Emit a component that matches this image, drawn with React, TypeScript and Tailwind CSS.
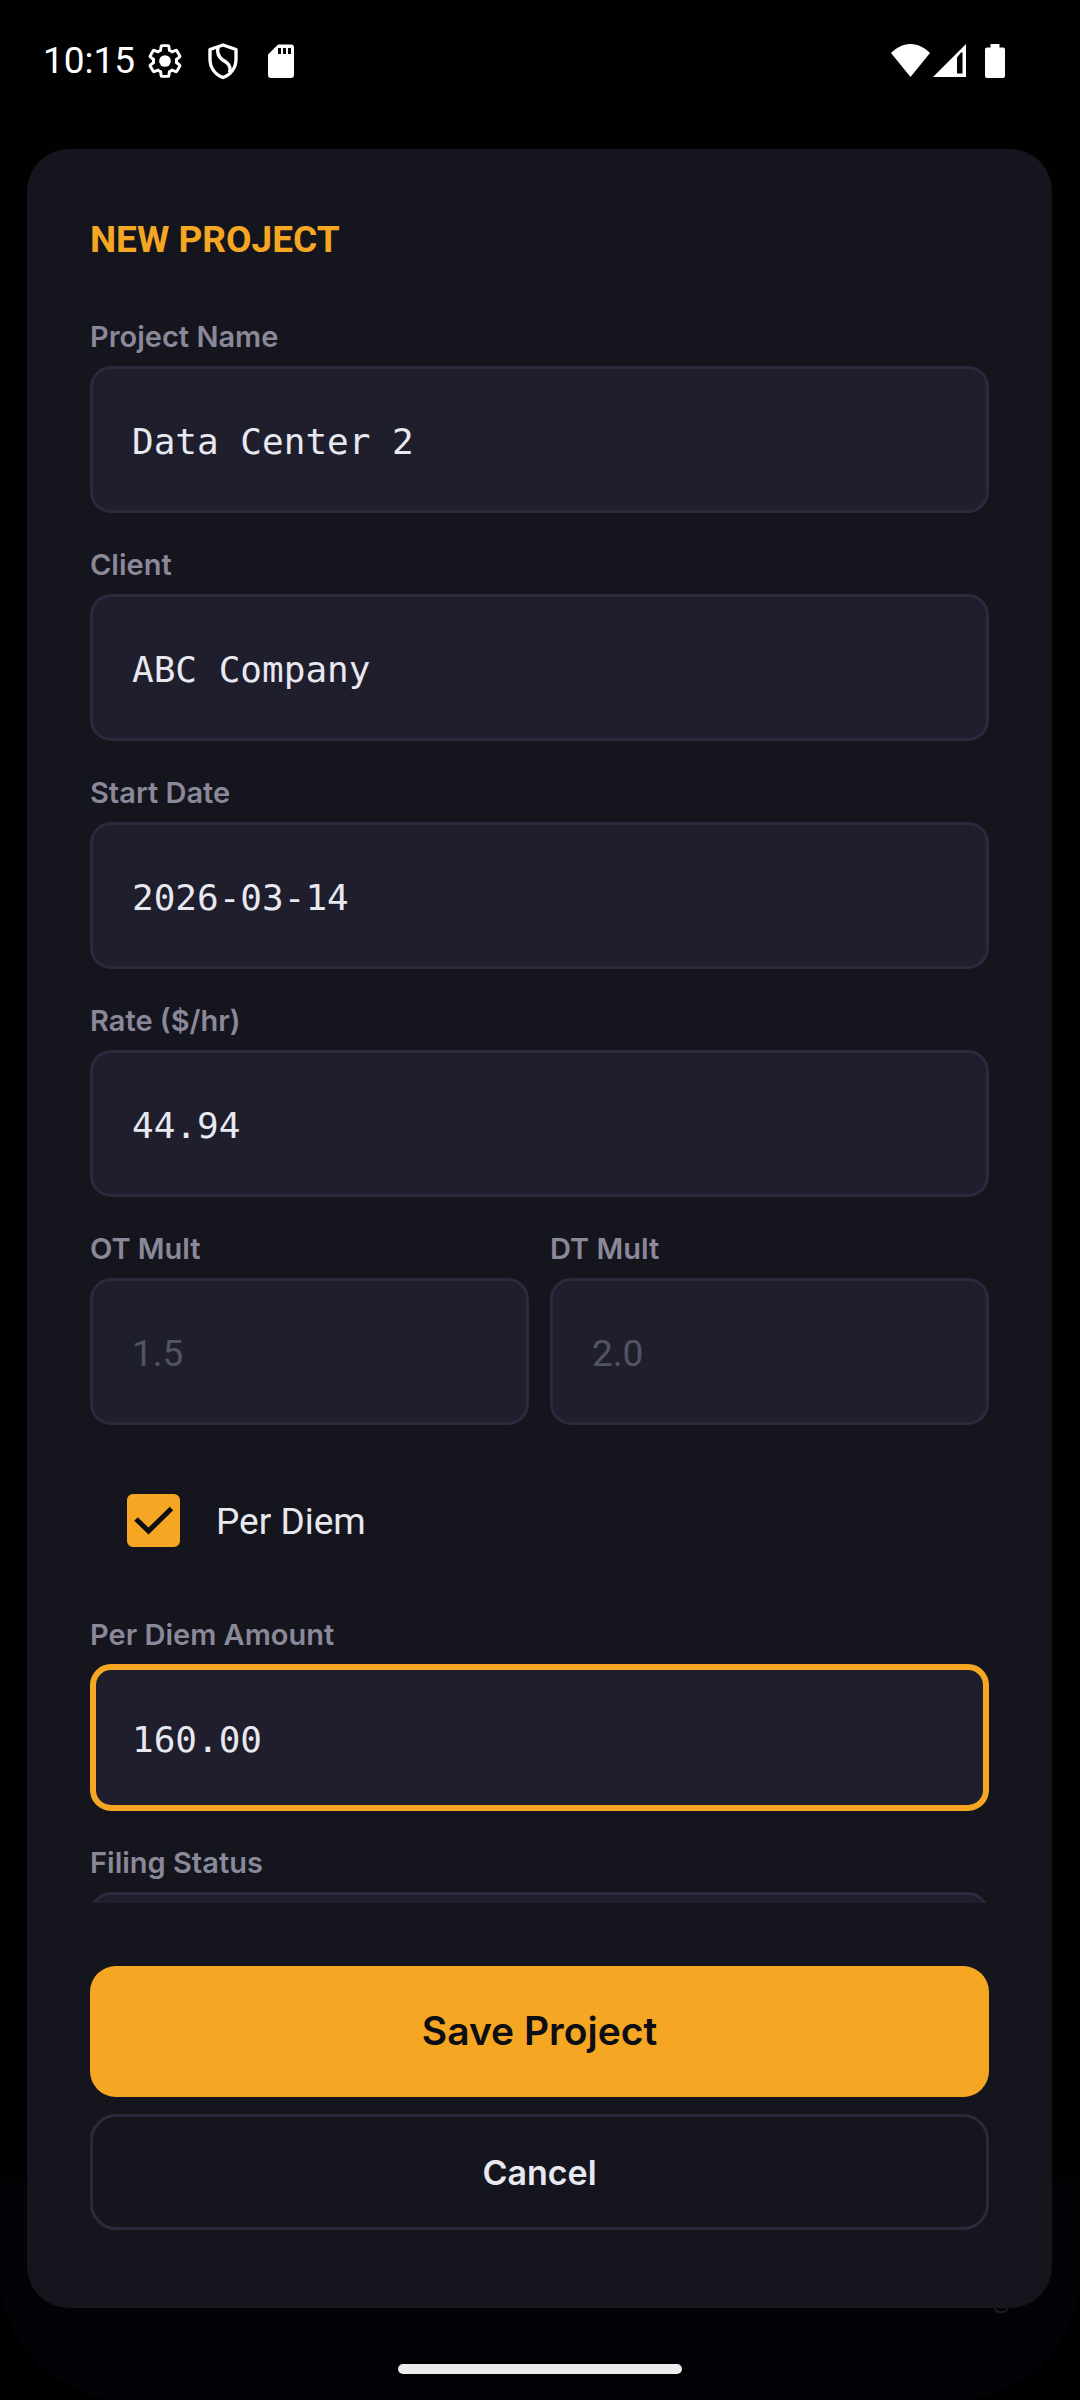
import { useState } from "react";
import clsx from "clsx";

const TEXT_FIELDS = [
  { id: "name", label: "Project Name", value: "Data Center 2" },
  { id: "client", label: "Client", value: "ABC Company" },
  { id: "start-date", label: "Start Date", value: "2026-03-14" },
  { id: "rate", label: "Rate ($/hr)", value: "44.94" },
];

const GEAR =
  "M19.43 12.98c.04-.32.07-.64.07-.98 0-.34-.03-.66-.07-.98l2.11-1.65c.19-.15.24-.42.12-.64l-2-3.46c-.09-.16-.26-.25-.44-.25-.06 0-.12.01-.17.03l-2.49 1c-.52-.4-1.08-.73-1.69-.98l-.38-2.65C14.46 2.18 14.25 2 14 2h-4c-.25 0-.46.18-.49.42l-.38 2.65c-.61.25-1.17.59-1.69.98l-2.49-1c-.06-.02-.12-.03-.18-.03-.17 0-.34.09-.43.25l-2 3.46c-.13.22-.07.49.12.64l2.11 1.65c-.04.32-.07.65-.07.98 0 .33.03.66.07.98l-2.11 1.65c-.19.15-.24.42-.12.64l2 3.46c.09.16.26.25.44.25.06 0 .12-.01.17-.03l2.49-1c.52.4 1.08.73 1.69.98l.38 2.65c.03.24.24.42.49.42h4c.25 0 .46-.18.49-.42l.38-2.65c.61-.25 1.17-.59 1.69-.98l2.49 1c.06.02.12.03.18.03.17 0 .34-.09.43-.25l2-3.46c.12-.22.07-.49-.12-.64l-2.11-1.65z";

function StatusBar() {
  return (
    <header className="flex h-[121px] shrink-0 items-center justify-between pr-[75px] pl-[43px] text-white">
      <div className="flex items-center gap-[18px]">
        <div className="flex items-center gap-[10px]">
          <span className="font-['Roboto',sans-serif] text-[37px] leading-10">10:15</span>
          <svg className="size-10" viewBox="-1 -1 26 26" fill="none" stroke="currentColor" strokeWidth="1.9">
            <path d={GEAR} />
            <circle cx="12" cy="12" r="3.8" fill="currentColor" stroke="none" />
          </svg>
        </div>
        <svg className="size-10" viewBox="0 0 40 40" fill="none" stroke="currentColor" strokeWidth="3.4" strokeLinejoin="round">
          <path d="M20 4 33 8.5V18C33 26.5 28 33.5 20 36.5 12 33.5 7 26.5 7 18V8.5Z" />
          <path d="M15 6.5C14 11 15 15 19 18.5 25 22 28.5 25 26.5 31.5" />
        </svg>
        <svg className="size-10" viewBox="0 0 40 40" fill="currentColor">
          <path
            fillRule="evenodd"
            d="M17 3.5H30a3 3 0 0 1 3 3V34a3 3 0 0 1-3 3H10a3 3 0 0 1-3-3V13.5ZM17 7v6h3V7ZM22 7v6h3V7ZM27 7v6h3V7Z"
          />
        </svg>
      </div>
      <div className="flex items-center">
        <svg className="h-[33px] w-[39px]" viewBox="0 0 39 33" fill="currentColor">
          <path d="M0 9C5 4 11.5 0 19.5 0S34 4 39 9L19.5 33Z" />
        </svg>
        <svg className="ml-[3px] size-[33px]" viewBox="0 0 33 33" fill="currentColor">
          <path fillRule="evenodd" d="M33 0V33H0ZM24 13.5V29.5H29.5V8.5H28Z" />
        </svg>
        <svg className="ml-[19px] h-[34px] w-5" viewBox="0 0 20 34" fill="currentColor">
          <path d="M5.5 0H14.5V3.5H18a2 2 0 0 1 2 2V32a2 2 0 0 1-2 2H2a2 2 0 0 1-2-2V5.5a2 2 0 0 1 2-2H5.5Z" />
        </svg>
      </div>
    </header>
  );
}

type FieldProps = {
  id: string;
  label: string;
  value?: string;
  placeholder?: string;
  active?: boolean;
};

function Field({ id, label, value, placeholder, active }: FieldProps) {
  return (
    <div className="flex min-w-0 flex-col gap-[9px]">
      <label
        htmlFor={id}
        className="font-['Inter',sans-serif] text-[29px] leading-10 font-semibold text-[#8a8899]"
      >
        {label}
      </label>
      <input
        id={id}
        type="text"
        defaultValue={value}
        placeholder={placeholder}
        className={clsx(
          "h-[147px] w-full rounded-[21px] bg-[#1f1e2d] pt-1 font-['DejaVu_Sans_Mono',monospace] text-[36px] text-[#e8e8f0] outline-none placeholder:font-['Roboto',sans-serif] placeholder:text-[37px] placeholder:text-[#545363]",
          active ? "border-6 border-[#f5a623] px-9" : "border-3 border-[#2a2a3c] px-[39px]",
        )}
      />
    </div>
  );
}

function PerDiemToggle() {
  const [checked, setChecked] = useState(true);

  return (
    <div className="flex h-[126px] items-center gap-9 pl-[37px]">
      <span className="grid size-[53px] place-items-center">
        <input
          id="per-diem"
          type="checkbox"
          checked={checked}
          onChange={() => setChecked(!checked)}
          className="col-start-1 row-start-1 size-full appearance-none rounded-[6px] border-6 border-[#8a8899] checked:border-[#f5a623] checked:bg-[#f5a623]"
        />
        {checked && (
          <svg
            className="pointer-events-none col-start-1 row-start-1 size-full"
            viewBox="0 0 53 53"
            fill="none"
            stroke="#0d0d14"
            strokeWidth="5"
          >
            <path d="M9 25 21.5 37 44.5 14.5" />
          </svg>
        )}
      </span>
      <label htmlFor="per-diem" className="pt-1 font-['Roboto',sans-serif] text-[37px] text-[#e8e8f0]">
        Per Diem
      </label>
    </div>
  );
}

function ProjectForm() {
  return (
    <form
      onSubmit={(event) => event.preventDefault()}
      className="mt-7 mr-7 ml-[27px] flex min-h-0 flex-1 flex-col rounded-[42px] bg-[#15151e] px-[63px] pt-[63px] pb-[78px]"
    >
      <h1 className="font-['Roboto',sans-serif] text-[37px] leading-14 font-bold text-[#f5a623]">
        NEW PROJECT
      </h1>

      <div className="mt-[49px] flex min-h-0 flex-1 flex-col gap-8 overflow-y-auto [scrollbar-width:none] *:shrink-0">
        {TEXT_FIELDS.map((field) => (
          <Field key={field.id} {...field} />
        ))}
        <div className="grid grid-cols-2 gap-[21px]">
          <Field id="ot-mult" label="OT Mult" placeholder="1.5" />
          <Field id="dt-mult" label="DT Mult" placeholder="2.0" />
        </div>
        <PerDiemToggle />
        <Field id="per-diem-amount" label="Per Diem Amount" value="160.00" active />
        <Field id="filing-status" label="Filing Status" />
      </div>

      <div className="mt-[63px] flex flex-col gap-[17px] font-['Inter',sans-serif] font-semibold">
        <button type="submit" className="h-[131px] rounded-[26px] bg-[#f5a623] text-[39px] text-[#0d0d14]">
          Save Project
        </button>
        <button type="button" className="h-[116px] rounded-[26px] border-3 border-[#2a2a3c] text-[34px] text-[#e8e8f0]">
          Cancel
        </button>
      </div>
    </form>
  );
}

export default function App() {
  return (
    <main className="h-screen bg-black">
      <div className="relative isolate flex h-full flex-col overflow-hidden rounded-[125px] bg-[#010101]">
        {/* dimmed tab bar behind the sheet */}
        <div className="absolute inset-x-0 bottom-0 -z-10 h-[217px] bg-[#030307]">
          <span className="absolute top-[118px] right-[72px] h-[12px] w-[14px] rounded-[5px] border-2 border-[#1e1e22]" />
        </div>
        <StatusBar />
        <ProjectForm />
        <div className="flex h-[92px] shrink-0 justify-center pt-14">
          <div className="h-[10px] w-[284px] rounded-full bg-[#ececec]" />
        </div>
      </div>
    </main>
  );
}
